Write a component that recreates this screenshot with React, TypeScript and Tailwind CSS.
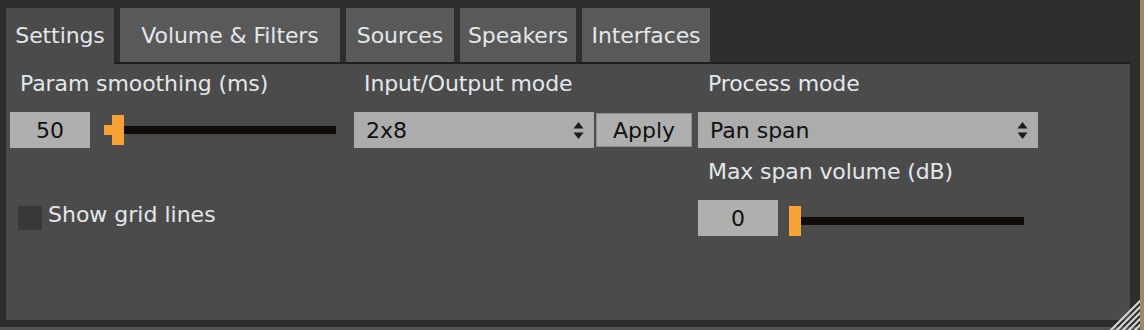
import React from "react";

const font = { fontFamily: '"DejaVu Sans", sans-serif' };

const tabs = [
  { name: "Settings", w: "w-[108px]", active: true },
  { name: "Volume & Filters", w: "w-[220px]" },
  { name: "Sources", w: "w-[108px]" },
  { name: "Speakers", w: "w-[116px]" },
  { name: "Interfaces", w: "w-[128px]" },
];

const Arrows = () => (
  <svg width="11" height="19" viewBox="0 0 11 19" className="shrink-0">
    <path d="M5.5 1 L10.5 7.5 L0.5 7.5 Z" fill="#1c1c1c" />
    <path d="M0.5 11.5 L10.5 11.5 L5.5 18 Z" fill="#1c1c1c" />
  </svg>
);

const Label = ({ children }: { children: React.ReactNode }) => (
  <div className="pl-[10px] h-[26px] leading-[26px] text-[22px] tracking-[-0.1px] text-[#e3e7ea] whitespace-nowrap">
    {children}
  </div>
);

const NumBox = ({ value }: { value: string }) => (
  <div className="w-[80px] h-[36px] bg-[#afafaf] flex items-center justify-center text-[22px] text-[#111]">
    {value}
  </div>
);

const Select = ({ value, w }: { value: string; w: string }) => (
  <div className={`${w} h-[36px] bg-[#acacac] flex items-center justify-between pl-[12px] pr-[10px] text-[22px] text-[#111]`}>
    <span>{value}</span>
    <Arrows />
  </div>
);

const App = () => {
  return (
    <div className="w-[1144px] h-[330px] bg-[#2d2d2d] flex overflow-hidden relative" style={font}>
      <div className="w-[1140px] flex flex-col">
        {/* tabs */}
        <div className="flex items-end gap-[6px] pl-[6px] pt-[8px]">
          {tabs.map((t) =>
            t.active ? (
              <div
                key={t.name}
                className={`${t.w} h-[56px] -mb-[2px] pb-[2px] relative z-10 bg-[#4b4b4b] flex items-center justify-center text-[22px] tracking-[-0.1px] text-[#e3e7ea]`}
              >
                {t.name}
              </div>
            ) : (
              <div
                key={t.name}
                className={`${t.w} h-[54px] bg-[#595959] flex items-center justify-center text-[22px] tracking-[-0.1px] text-[#e3e7ea] whitespace-nowrap`}
              >
                {t.name}
              </div>
            )
          )}
        </div>

        {/* panel */}
        <div className="ml-[6px] w-[1124px] h-[258px] bg-[#4b4b4b] border-t-2 border-[#1f1f1f] flex pl-[4px] pt-[7px]">
          {/* column 1 */}
          <div className="w-[326px] flex flex-col">
            <Label>Param smoothing (ms)</Label>
            <div className="flex items-center mt-[15px]">
              <NumBox value="50" />
              <div className="ml-[14px] w-[232px] h-[30px] flex items-center">
                <div className="w-[8px] h-[10px] bg-[#f6a234]" />
                <div className="w-[12px] h-[30px] bg-[#f6a234]" />
                <div className="flex-1 h-[8px] bg-[#0f0b08]" />
              </div>
            </div>
            <div className="flex items-start mt-[54px]">
              <div className="w-[24px] h-[24px] bg-[#383838] ml-[8px] mt-[4px]" />
              <span className="ml-[6px] leading-[26px] text-[22px] text-[#e3e7ea]">Show grid lines</span>
            </div>
          </div>

          {/* column 2 */}
          <div className="ml-[18px] w-[338px] flex flex-col">
            <Label>Input/Output mode</Label>
            <div className="flex items-center mt-[15px] gap-[2px]">
              <Select value="2x8" w="w-[240px]" />
              <div className="w-[96px] h-[34px] bg-[#afafaf] border border-[#8e8e8e] flex items-center justify-center text-[22px] text-[#111]">
                Apply
              </div>
            </div>
          </div>

          {/* column 3 */}
          <div className="ml-[6px] w-[340px] flex flex-col">
            <Label>Process mode</Label>
            <div className="mt-[15px]">
              <Select value="Pan span" w="w-[340px]" />
            </div>
            <div className="mt-[11px]">
              <Label>Max span volume (dB)</Label>
            </div>
            <div className="flex items-end mt-[15px]">
              <NumBox value="0" />
              <div className="ml-[11px] w-[235px] h-[30px] flex items-center">
                <div className="w-[12px] h-[30px] bg-[#f6a234]" />
                <div className="flex-1 h-[8px] bg-[#0f0b08]" />
              </div>
            </div>
          </div>
        </div>

        <div className="flex-1 flex flex-col justify-end">
          <div className="h-[3px] bg-[#535353]" />
        </div>
      </div>
      <div className="w-[4px] bg-[#9c8a62]" />

      {/* resize grip */}
      <svg width="34" height="34" viewBox="0 0 34 34" className="absolute right-[4px] bottom-0">
        <path
          d="M4 35 L35 4 M10 35 L35 10 M16 35 L35 16 M22 35 L35 22 M28 35 L35 28"
          stroke="#d4d4d4"
          strokeWidth="2.2"
        />
      </svg>
    </div>
  );
};

export default App;
